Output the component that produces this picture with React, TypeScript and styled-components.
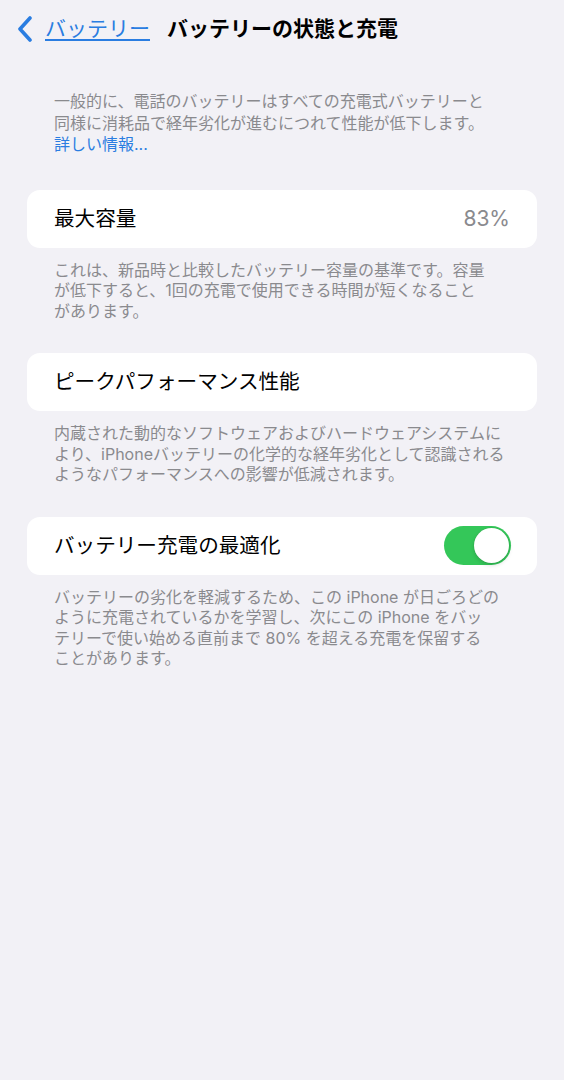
import React from "react";
import styled, { createGlobalStyle } from "styled-components";

const GlobalStyle = createGlobalStyle`
  html, body {
    margin: 0;
    padding: 0;
    background: #f2f1f6;
  }
  body {
    font-family: "Inter", "Noto Sans CJK JP", "Noto Sans", sans-serif;
    -webkit-font-smoothing: antialiased;
  }
`;

const Page = styled.div`
  width: 564px;
  min-height: 1080px;
  background: #f2f1f6;
  box-sizing: border-box;
  padding: 0 27px;
`;

const NavBar = styled.div`
  height: 58px;
  display: flex;
  align-items: center;
  margin-left: -10px;
`;

const BackButton = styled.a`
  display: flex;
  align-items: center;
  gap: 12px;
  color: #2a7de1;
  text-decoration: none;
`;

const BackLabel = styled.span`
  font-size: 21px;
  line-height: 26px;
  color: #2a7de1;
  text-decoration: underline;
  text-decoration-thickness: 1.5px;
  text-underline-offset: 3px;
`;

const Title = styled.h1`
  margin: 0 0 0 17px;
  font-size: 21px;
  line-height: 26px;
  font-weight: 700;
  color: #000;
`;

const Description = styled.p<{ $top?: number }>`
  margin: ${(p) => p.$top ?? 12}px 0 0;
  padding: 0 0 0 27px;
  font-size: 16px;
  line-height: 20.5px;
  color: #8a8a8e;
`;

const Intro = styled(Description)`
  line-height: 21.5px;
`;

const Link = styled.span`
  color: #2a7de1;
`;

const Card = styled.div<{ $gap: number }>`
  margin-top: ${(p) => p.$gap}px;
  height: 58px;
  background: #ffffff;
  border-radius: 13px;
  display: flex;
  align-items: center;
  justify-content: space-between;
  padding: 0 26px 0 27px;
  box-sizing: border-box;
`;

const RowLabel = styled.span`
  font-size: 20.6px;
  line-height: 26px;
  color: #000;
`;

const RowValue = styled.span`
  font-size: 21px;
  line-height: 26px;
  color: #8a8a8e;
  margin-right: 1px;
`;

const Toggle = styled.div<{ $on: boolean }>`
  width: 67px;
  height: 39px;
  border-radius: 20px;
  background: ${(p) => (p.$on ? "#34c759" : "#e9e9eb")};
  display: flex;
  align-items: center;
  justify-content: ${(p) => (p.$on ? "flex-end" : "flex-start")};
  padding: 2px;
  box-sizing: border-box;
`;

const Knob = styled.div`
  width: 35px;
  height: 35px;
  border-radius: 50%;
  background: #ffffff;
  box-shadow: 0 0 0 0.5px rgba(0, 0, 0, 0.08), 0 2px 4px rgba(0, 0, 0, 0.15);
`;

const Chevron = () => (
  <svg width="16" height="26" viewBox="0 0 16 26" fill="none">
    <path
      d="M13 2 L3 13 L13 24"
      stroke="#2a7de1"
      strokeWidth="3.6"
      strokeLinecap="round"
      strokeLinejoin="round"
    />
  </svg>
);

export default function App() {
  return (
    <>
      <GlobalStyle />
      <Page>
        <NavBar>
          <BackButton>
            <Chevron />
            <BackLabel>バッテリー</BackLabel>
          </BackButton>
          <Title>バッテリーの状態と充電</Title>
        </NavBar>

        <Intro $top={33}>
          一般的に、電話のバッテリーはすべての充電式バッテリーと
          <br />
          同様に消耗品で経年劣化が進むにつれて性能が低下します。
          <br />
          <Link>詳しい情報...</Link>
        </Intro>

        <Card $gap={34}>
          <RowLabel>最大容量</RowLabel>
          <RowValue>83%</RowValue>
        </Card>
        <Description>
          これは、新品時と比較したバッテリー容量の基準です。容量
          <br />
          が低下すると、1回の充電で使用できる時間が短くなること
          <br />
          があります。
        </Description>

        <Card $gap={32}>
          <RowLabel>ピークパフォーマンス性能</RowLabel>
        </Card>
        <Description>
          内蔵された動的なソフトウェアおよびハードウェアシステムに
          <br />
          より、iPhoneバッテリーの化学的な経年劣化として認識される
          <br />
          ようなパフォーマンスへの影響が低減されます。
        </Description>

        <Card $gap={32}>
          <RowLabel>バッテリー充電の最適化</RowLabel>
          <Toggle $on>
            <Knob />
          </Toggle>
        </Card>
        <Description>
          バッテリーの劣化を軽減するため、この iPhone が日ごろどの
          <br />
          ように充電されているかを学習し、次にこの iPhone をバッ
          <br />
          テリーで使い始める直前まで 80% を超える充電を保留する
          <br />
          ことがあります。
        </Description>
      </Page>
    </>
  );
}
